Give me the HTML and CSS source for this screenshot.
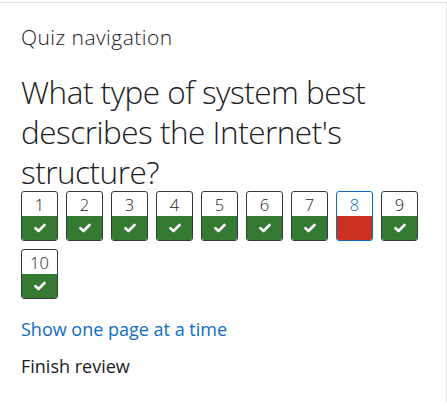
FILE: index.html
```html
<!DOCTYPE html>
<html lang="en">
<head>
<meta charset="utf-8">
<title>Quiz navigation</title>
<link rel="stylesheet" href="styles.css">
</head>
<body>
<div class="card">
  <h5 class="card-title">Quiz navigation</h5>
  <h3 class="question">What type of system best describes the Internet's structure?</h3>
  <div class="qn-buttons">
    <a class="qn" href="#"><span class="num">1</span><span class="state ok"><svg viewBox="0 0 12 10"><path d="M1.5 5.2 L4.5 8 L10.5 2" /></svg></span></a>
    <a class="qn" href="#"><span class="num">2</span><span class="state ok"><svg viewBox="0 0 12 10"><path d="M1.5 5.2 L4.5 8 L10.5 2" /></svg></span></a>
    <a class="qn" href="#"><span class="num">3</span><span class="state ok"><svg viewBox="0 0 12 10"><path d="M1.5 5.2 L4.5 8 L10.5 2" /></svg></span></a>
    <a class="qn" href="#"><span class="num">4</span><span class="state ok"><svg viewBox="0 0 12 10"><path d="M1.5 5.2 L4.5 8 L10.5 2" /></svg></span></a>
    <a class="qn" href="#"><span class="num">5</span><span class="state ok"><svg viewBox="0 0 12 10"><path d="M1.5 5.2 L4.5 8 L10.5 2" /></svg></span></a>
    <a class="qn" href="#"><span class="num">6</span><span class="state ok"><svg viewBox="0 0 12 10"><path d="M1.5 5.2 L4.5 8 L10.5 2" /></svg></span></a>
    <a class="qn" href="#"><span class="num">7</span><span class="state ok"><svg viewBox="0 0 12 10"><path d="M1.5 5.2 L4.5 8 L10.5 2" /></svg></span></a>
    <a class="qn current" href="#"><span class="num">8</span><span class="state bad"></span></a>
    <a class="qn" href="#"><span class="num">9</span><span class="state ok"><svg viewBox="0 0 12 10"><path d="M1.5 5.2 L4.5 8 L10.5 2" /></svg></span></a>
    <a class="qn" href="#"><span class="num">10</span><span class="state ok"><svg viewBox="0 0 12 10"><path d="M1.5 5.2 L4.5 8 L10.5 2" /></svg></span></a>
  </div>
  <div class="links">
    <a class="link" href="#">Show one page at a time</a>
    <a class="finish" href="#">Finish review</a>
  </div>
</div>
</body>
</html>
```
FILE: styles.css
```css
html, body {
  margin: 0;
  padding: 0;
  background: #fff;
}
body {
  font-family: "Open Sans", "Noto Sans", sans-serif;
  color: #1d2125;
}
.card {
  margin-top: 2px;
  border-top: 1px solid #dee2e6;
  border-right: 1px solid #dee2e6;
  padding: 22px 20px 20px 21px;
  height: 400px;
  box-sizing: border-box;
}
.card-title {
  margin: 0;
  font-size: 21px;
  font-weight: 300;
  line-height: 24px;
  letter-spacing: 0.45px;
  color: #1d2125;
}
.question {
  margin: 23px 0 -1px 0;
  font-size: 31.5px;
  font-weight: 300;
  line-height: 40px;
  letter-spacing: -0.5px;
}
.qn-buttons {
  display: flex;
  flex-wrap: wrap;
  gap: 8px;
  width: 400px;
}
.qn {
  width: 37px;
  height: 50px;
  box-sizing: border-box;
  border: 1px solid #343a40;
  border-radius: 3px;
  overflow: hidden;
  display: flex;
  flex-direction: column;
  text-decoration: none;
  color: #1d2125;
}
.qn.current {
  border-color: #0f6cbf;
}
.qn.current .num { color: #0f6cbf; }
.num {
  height: 24px;
  display: flex;
  align-items: center;
  justify-content: center;
  font-size: 16.5px;
  font-weight: 300;
}
.state {
  flex: 1;
  display: flex;
  align-items: center;
  justify-content: center;
}
.state.ok { background: #357a32; }
.state.bad { background: #ca3120; }
.state svg {
  width: 12px;
  height: 10px;
  fill: none;
  stroke: #fff;
  stroke-width: 2.6;
  stroke-linecap: round;
  stroke-linejoin: round;
}
.links {
  margin-top: 18px;
  display: flex;
  flex-direction: column;
  gap: 13px;
}
.link, .finish {
  font-size: 18px;
  line-height: 24px;
  text-decoration: none;
}
.link { color: #0f6cbf; }
.finish { color: #1d2125; }
```
